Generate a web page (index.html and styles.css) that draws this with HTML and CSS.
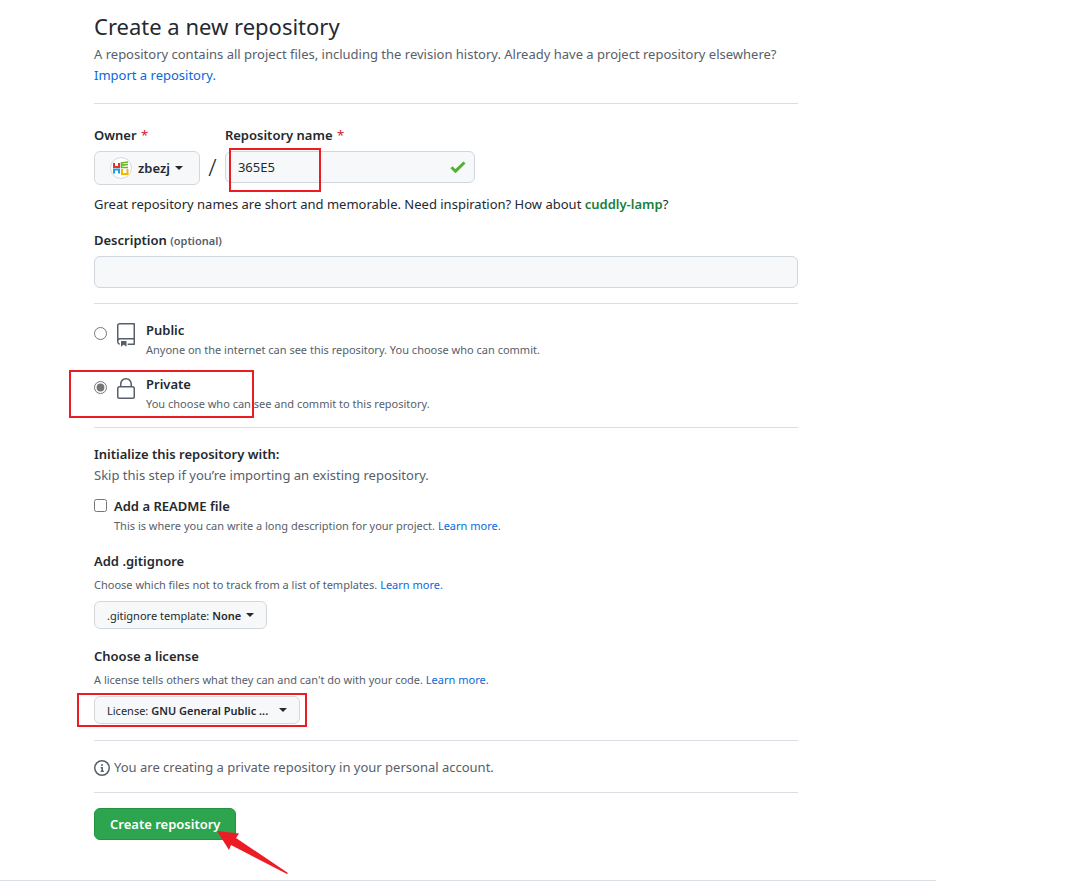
FILE: index.html
```html
<!DOCTYPE html>
<html lang="en">
<head>
<meta charset="utf-8">
<meta name="viewport" content="width=device-width, initial-scale=1">
<title>Create a New Repository</title>
<link rel="stylesheet" href="styles.css">
</head>
<body>
<div class="page">
<main class="content">
  <header class="intro">
    <h1 class="title">Create a new repository</h1>
    <p class="lead">A repository contains all project files, including the revision history. Already have a project repository elsewhere? <br><a href="#">Import a repository.</a></p>
  </header>

  <form class="form">
    <section class="section naming">
      <div class="name-row">
        <div class="field">
          <label class="label" for="owner">Owner <span class="required">*</span></label>
          <button class="btn owner-btn" id="owner" type="button" aria-haspopup="menu">
            <svg class="avatar" viewBox="0 0 22 22" width="22" height="22" aria-hidden="true">
              <circle cx="11" cy="11" r="10.5" fill="#fff" stroke="#d5d8dc"/>
              <g fill="none" stroke-width="2">
                <path d="M4 6v4h5M9 6v5" stroke="#e8312b"/>
                <path d="M18 5l-6.500 1v4.500H18M11.500 8.200l6.500-.7" stroke="#6cb52d" stroke-width="1.700"/>
                <path d="M4 16.500V12.500h5v4" stroke="#1e9fe0"/>
                <path d="M12 12v5h5.500V12" stroke="#f7b500"/>
              </g>
            </svg>
            <span class="strong">zbezj</span>
            <span class="caret"></span>
          </button>
        </div>
        <span class="slash">/</span>
        <div class="field name-field">
          <label class="label" for="repo">Repository name <span class="required">*</span></label>
          <div class="input-wrap">
            <input class="input" id="repo" type="text" value="365E5">
            <svg class="check" viewBox="0 0 16 12" width="16" height="12" aria-hidden="true"><path d="M1.500 6.200l4 4L14.500 1.500" fill="none" stroke="#55b030" stroke-width="3"/></svg>
            <span class="mark mark-name"></span>
          </div>
        </div>
      </div>
      <p class="hint">Great repository names are short and memorable. Need inspiration? How about <strong class="suggestion">cuddly-lamp</strong>?</p>
      <label class="label" for="desc">Description <span class="optional">(optional)</span></label>
      <input class="input desc" id="desc" type="text">
    </section>

    <section class="section visibility">
      <div class="choice">
        <input class="radio" type="radio" name="visibility" id="public">
        <svg class="choice-icon" viewBox="0 0 24 24" width="24" height="24" fill="#57606a" aria-hidden="true"><path fill-rule="evenodd" d="M3 2.750A2.750 2.750 0 015.750 0h14.500a.75.75 0 01.75.75v20.500a.75.75 0 01-.75.75h-6a.75.75 0 010-1.500h5.250v-4H6A1.500 1.500 0 004.500 18v.75c0 .716.430 1.334 1.050 1.605a.75.75 0 01-.6 1.374A3.250 3.250 0 013 18.750v-16zM19.500 1.500V15H6c-.546 0-1.059.146-1.500.401V2.750c0-.69.56-1.250 1.250-1.250H19.500z"/><path d="M7 18.250a.25.25 0 01.25-.25h5a.25.25 0 01.25.25v5.010a.25.25 0 01-.397.201l-2.206-1.604a.25.25 0 00-.294 0L7.397 23.460a.25.25 0 01-.397-.2v-5.010z"/></svg>
        <div>
          <label class="choice-title" for="public">Public</label>
          <p class="note">Anyone on the internet can see this repository. You choose who can commit.</p>
        </div>
      </div>
      <div class="choice">
        <input class="radio" type="radio" name="visibility" id="private" checked>
        <svg class="choice-icon" viewBox="0 0 24 24" width="24" height="24" fill="#57606a" aria-hidden="true"><path fill-rule="evenodd" d="M6 9V7.250C6 3.845 8.503 1 12 1s6 2.845 6 6.250V9h.5a2.500 2.500 0 012.500 2.500v8a2.500 2.500 0 01-2.500 2.500h-13A2.500 2.500 0 013 19.500v-8A2.500 2.500 0 015.500 9H6zm1.500-1.750C7.500 4.580 9.422 2.500 12 2.500c2.578 0 4.500 2.080 4.500 4.750V9h-9V7.250zm-3 4.250a1 1 0 011-1h13a1 1 0 011 1v8a1 1 0 01-1 1h-13a1 1 0 01-1-1v-8z"/></svg>
        <div>
          <label class="choice-title" for="private">Private</label>
          <p class="note">You choose who can see and commit to this repository.</p>
        </div>
        <span class="mark mark-private"></span>
      </div>
    </section>

    <section class="section init">
      <h2 class="heading">Initialize this repository with:</h2>
      <p class="sub">Skip this step if you’re importing an existing repository.</p>
      <div class="readme">
        <input class="checkbox" type="checkbox" id="readme">
        <div>
          <label class="choice-title" for="readme">Add a README file</label>
          <p class="note">This is where you can write a long description for your project. <a href="#">Learn more.</a></p>
        </div>
      </div>
      <div class="option">
        <h2 class="heading">Add .gitignore</h2>
        <p class="note">Choose which files not to track from a list of templates. <a href="#">Learn more.</a></p>
        <button class="btn btn-sm gitignore" type="button" aria-haspopup="menu"><span>.gitignore template: <span class="strong">None</span></span><span class="caret"></span></button>
      </div>
      <div class="option">
        <h2 class="heading">Choose a license</h2>
        <p class="note">A license tells others what they can and can't do with your code. <a href="#">Learn more.</a></p>
        <div class="license-wrap">
          <button class="btn btn-sm license" type="button" aria-haspopup="menu"><span>License: <span class="strong">GNU General Public ...</span></span><span class="caret"></span></button>
          <span class="mark mark-license"></span>
        </div>
      </div>
    </section>

    <p class="section notice">
      <svg viewBox="0 0 16 16" width="16" height="16" fill="#57606a" aria-hidden="true"><path fill-rule="evenodd" d="M8 1.500a6.500 6.500 0 100 13 6.500 6.500 0 000-13zM0 8a8 8 0 1116 0A8 8 0 010 8zm6.500-.25A.75.75 0 017.250 7h1a.75.75 0 01.75.75v2.750h.25a.75.75 0 010 1.500h-2a.75.75 0 010-1.500h.25v-2h-.25a.75.75 0 01-.75-.75zM8 6a1 1 0 100-2 1 1 0 000 2z"/></svg>
      <span>You are creating a private repository in your personal account.</span>
    </p>

    <div class="submit-wrap">
      <button class="submit" type="submit">Create repository</button>
      <svg class="arrow" viewBox="0 0 72 44" width="72" height="44" aria-hidden="true"><path d="M0 0L22 2.500 19 7 71 42 70 43 14 14 12 19z" fill="#ed1c24"/></svg>
    </div>
  </form>
</main>
<footer class="footer"></footer>
</div>
</body>
</html>
```
FILE: styles.css
```css
* { box-sizing: border-box; }

body {
  margin: 0;
  background: #fff;
  color: #24292f;
  font-family: "Noto Sans", "Open Sans", sans-serif;
  font-size: 13px;
  line-height: 21px;
}

h1, h2, p { margin: 0; }
a { color: #0969da; text-decoration: none; }
button, input { font: inherit; color: inherit; }

.page { max-width: 936px; }
.content { max-width: 704px; margin-left: 94px; }

.intro {
  padding: 8px 0 17px;
  border-bottom: 1px solid #d8dee4;
}
.title { font-size: 22px; font-weight: 400; line-height: 36px; }
.lead { color: #57606a; white-space: nowrap; }

.section { border-bottom: 1px solid #d8dee4; }

.naming { padding: 21px 0 15px; }
.name-row { display: flex; align-items: flex-end; }
.field { display: flex; flex-direction: column; align-items: flex-start; height: 60px; }
.label, .heading, .choice-title, .strong { font-weight: 600; }
.label, .choice-title { display: block; }
.heading { font-size: 13px; line-height: 21px; }
.field .label { margin-bottom: 5px; }
.required { color: #cf222e; font-weight: 400; margin-left: 1px; }
.optional { color: #57606a; font-size: 11px; }

.btn {
  display: flex;
  align-items: center;
  background: #f6f8fa;
  border: 1px solid #d5d8da;
  border-radius: 6px;
  white-space: nowrap;
}
.owner-btn { height: 34px; padding: 0 16px 0 15px; gap: 5px; }
.avatar { margin-right: 1px; flex: none; }
.caret {
  flex: none;
  border: 4px solid transparent;
  border-top-color: currentColor;
  border-bottom: 0;
}
.slash { width: 25px; font-size: 24px; font-weight: 300; line-height: 36px; text-align: center; }
.name-field { width: 250px; }
.input-wrap { position: relative; width: 100%; }
.input {
  display: block;
  width: 100%;
  height: 32px;
  padding: 0 12px;
  background: #f6f8fa;
  border: 1px solid #d0d7de;
  border-radius: 6px;
}
.check { position: absolute; right: 9px; top: 10px; }
.hint { margin: 9px 0 15px; }
.suggestion { color: #1a7f37; font-weight: 600; }
.desc { margin-top: 5px; }

.visibility { padding: 16px 0 12px; }
.choice { position: relative; display: flex; height: 41px; }
.choice + .choice { margin-top: 13px; }
.radio, .checkbox { width: 13px; height: 13px; margin: 0; flex: none; }
.radio { margin-top: 7px; accent-color: #757575; }
.choice-icon { margin: 3px 8px 0 7px; flex: none; }
.note { color: #57606a; font-size: 11px; line-height: 18px; white-space: nowrap; }

.init { padding: 16px 0; }
.sub { color: #57606a; }
.readme { display: flex; gap: 7px; margin-top: 10px; }
.checkbox { margin-top: 3px; }
.option { margin-top: 16px; }
.option + .option { margin-top: 17px; }
.option .note { margin: 4px 0 7px; }
.btn-sm { height: 28px; padding: 0 12px; gap: 5px; font-size: 11px; }
.license { gap: 11px; }
.license-wrap { position: relative; }

.notice {
  display: flex;
  align-items: center;
  gap: 4px;
  padding: 16px 0 14px;
  color: #57606a;
}

.submit-wrap { position: relative; padding: 15px 0 40px; }
.submit {
  height: 32px;
  padding: 0 15px;
  background: #2da44e;
  border: 1px solid #26943f;
  border-radius: 6px;
  color: #fff;
  font-weight: 600;
}
.footer { border-top: 1px solid #d8dee4; }

/* Red highlights laid over the form */
.mark { position: absolute; border: 2px solid #ed1c24; pointer-events: none; }
.mark-name { left: 4px; top: -3px; width: 92px; height: 44px; }
.mark-private { left: -25px; top: -4px; width: 185px; height: 48px; }
.mark-license { left: -17px; top: -3px; width: 230px; height: 34px; }
.arrow { position: absolute; left: 123px; top: 38px; pointer-events: none; }
```
